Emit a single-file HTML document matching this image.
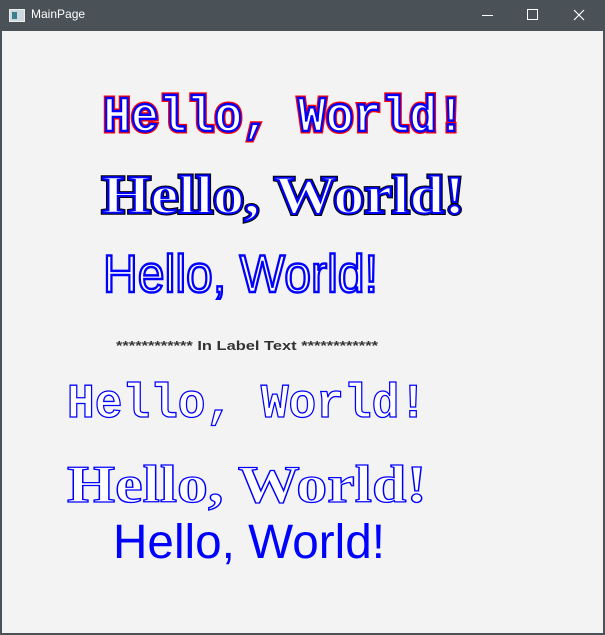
<!DOCTYPE html>
<html><head><style>
html,body{margin:0;padding:0;width:605px;height:635px;overflow:hidden;background:#4a5157;}
.win{position:absolute;left:0;top:0;width:605px;height:635px;background:#4a5157;}
.title{position:absolute;left:31px;top:7px;color:#fff;font:12px "Liberation Sans",sans-serif;}
.content{position:absolute;left:2px;top:31px;width:601px;height:602px;background:#f3f3f3;}
svg{position:absolute;left:0;top:0;}
</style></head><body>
<div class="win">
<div style="position:absolute;left:9px;top:9px;width:14px;height:11px;background:#cfd8dc;border:1px solid #eee;"><div style="position:absolute;left:2px;top:2px;width:5px;height:7px;background:#3a7f8f"></div></div>
<div class="title">MainPage</div>
<div style="position:absolute;left:482px;top:15px;width:11px;height:1px;background:#fff"></div>
<div style="position:absolute;left:527px;top:9px;width:9px;height:9px;border:1px solid #fff"></div>
<svg width="605" height="31"><path d="M574 10 L584 20 M584 10 L574 20" stroke="#fff" stroke-width="1.2"/></svg>
<div class="content"></div>
<svg width="605" height="635">
<g font-family="Liberation Mono, monospace" font-weight="bold">
<text x="103" y="131" font-size="50" textLength="362" lengthAdjust="spacingAndGlyphs" fill="#fff" stroke="#f00" stroke-width="5">Hello, World!</text>
<text x="103" y="131" font-size="50" textLength="362" lengthAdjust="spacingAndGlyphs" fill="#fff" stroke="#00f" stroke-width="2.5">Hello, World!</text>
</g>
<g font-family="Liberation Serif, serif" font-weight="bold">
<text x="102" y="213" font-size="54" textLength="363" lengthAdjust="spacingAndGlyphs" fill="#fff" stroke="#000" stroke-width="4">Hello, World!</text>
<text x="102" y="213" font-size="54" textLength="363" lengthAdjust="spacingAndGlyphs" fill="#fff" stroke="#00f" stroke-width="2">Hello, World!</text>
</g>
<text x="103" y="292" font-family="Liberation Sans, sans-serif" font-size="53" textLength="275" lengthAdjust="spacingAndGlyphs" fill="#fff" stroke="#00f" stroke-width="2.5">Hello, World!</text>
<text x="116" y="350" font-family="Liberation Sans, sans-serif" font-weight="bold" font-size="13" textLength="262" lengthAdjust="spacingAndGlyphs" fill="#333">************ In Label Text ************</text>
<text x="67" y="417" font-family="Liberation Mono, monospace" font-weight="bold" font-size="48" textLength="360" lengthAdjust="spacingAndGlyphs" fill="#fff" stroke="#00f" stroke-width="1.3">Hello, World!</text>
<text x="67" y="502" font-family="Liberation Serif, serif" font-weight="bold" font-size="53" textLength="360" lengthAdjust="spacingAndGlyphs" fill="#fff" stroke="#00f" stroke-width="1.3">Hello, World!</text>
<text x="113" y="558" font-family="Liberation Sans, sans-serif" font-size="48" textLength="272" lengthAdjust="spacingAndGlyphs" fill="#00f">Hello, World!</text>
</svg>
</div>
</body></html>
